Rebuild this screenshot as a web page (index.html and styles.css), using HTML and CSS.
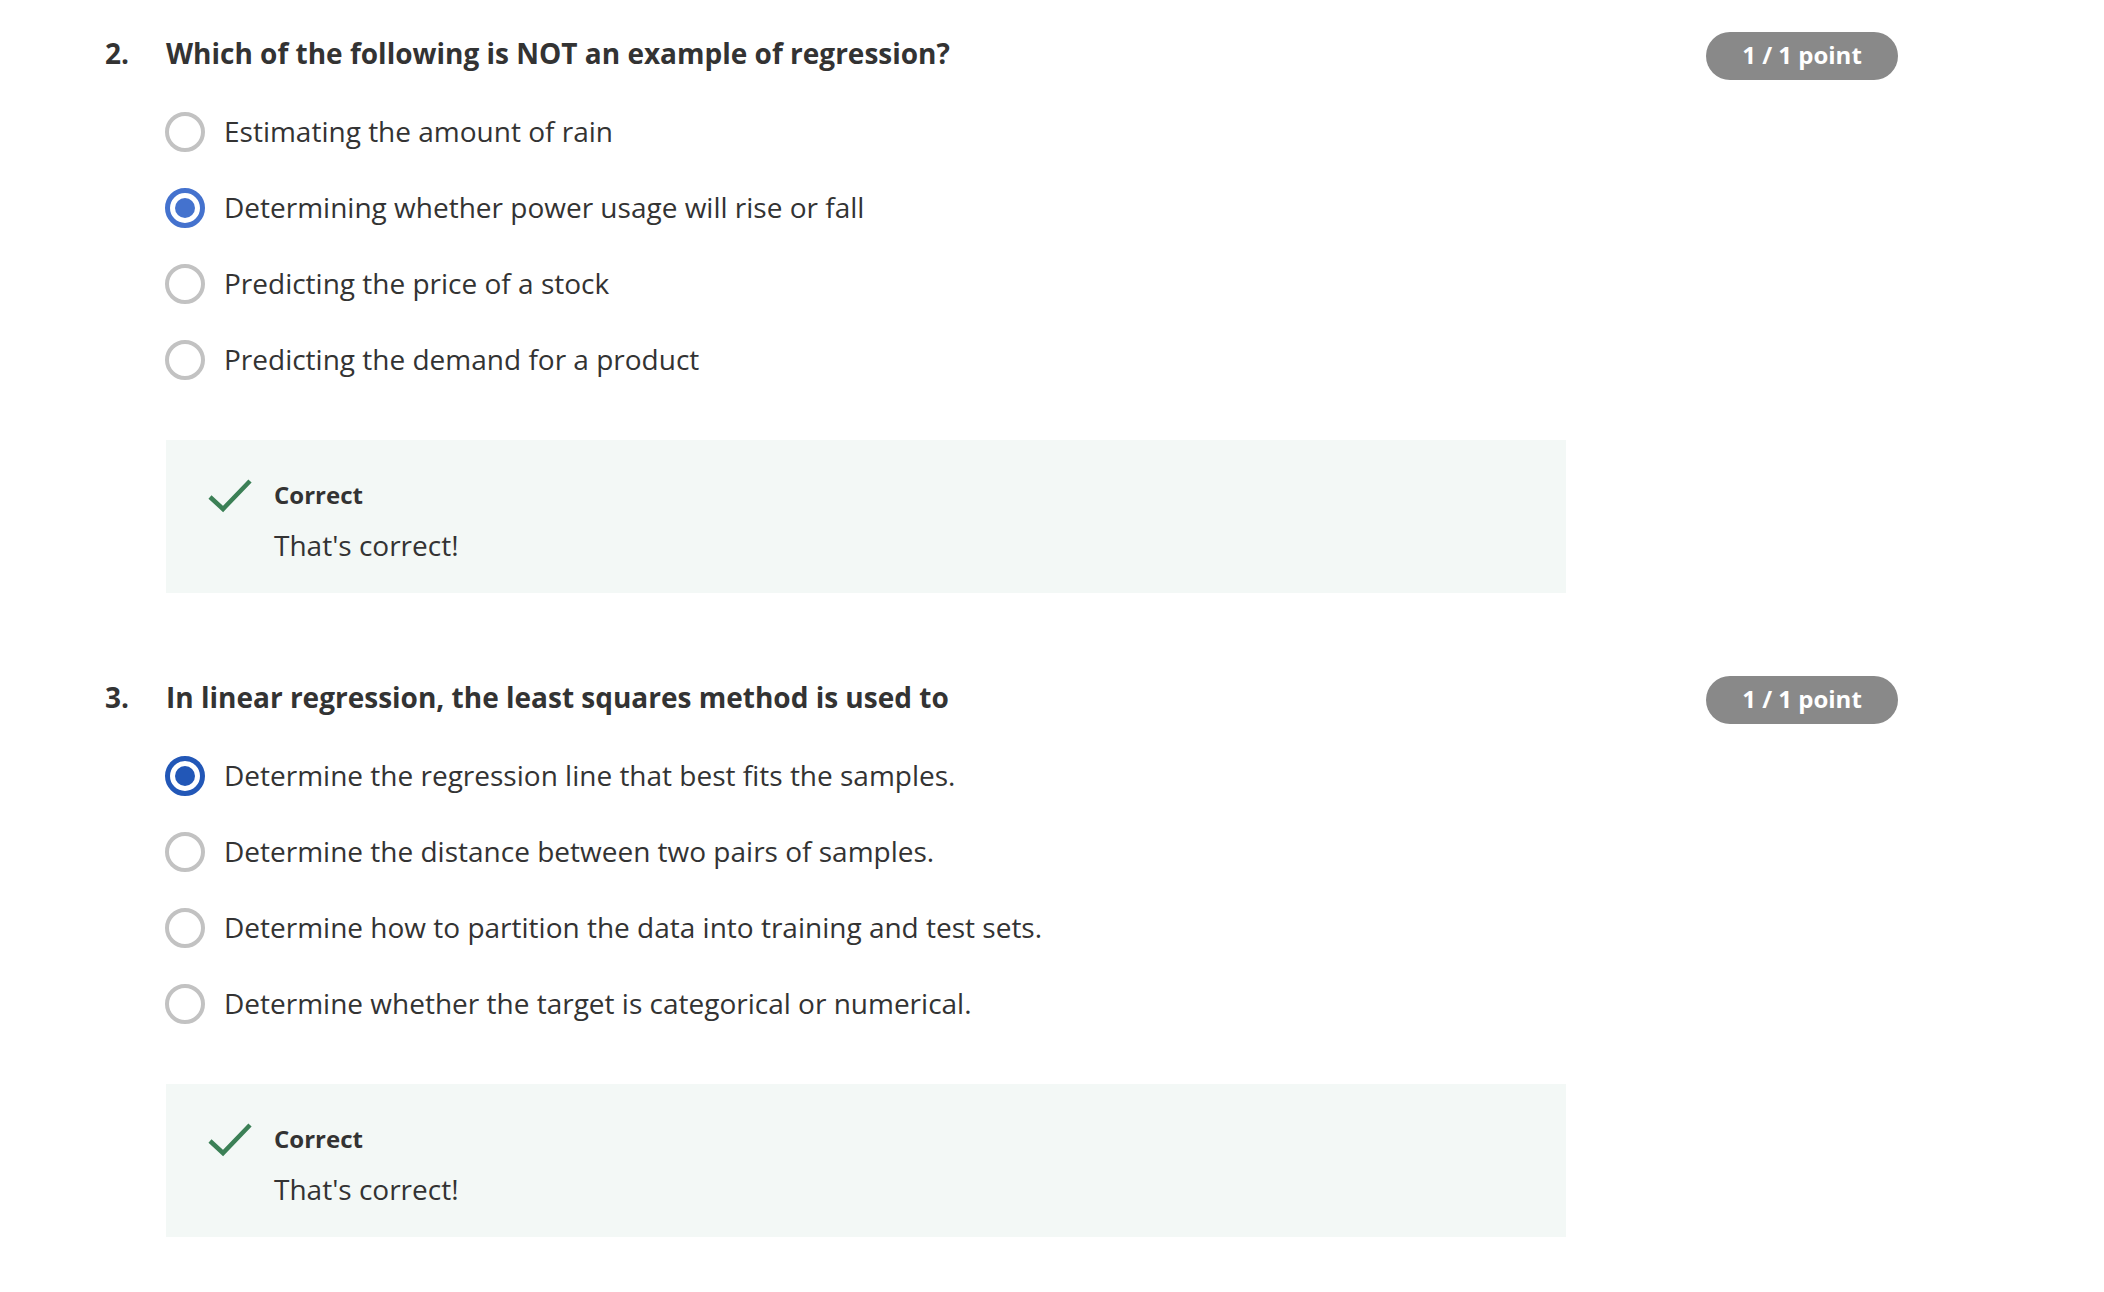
FILE: index.html
```html
<!DOCTYPE html>
<html lang="en">
<head>
<meta charset="utf-8">
<title>Quiz</title>
<link rel="stylesheet" href="styles.css">
</head>
<body>
<main class="quiz">
  <section class="question">
    <div class="q-head">
      <div class="q-num">2.</div>
      <div class="q-title">Which of the following is NOT an example of regression?</div>
      <div class="badge">1 / 1 point</div>
    </div>
    <div class="options">
      <div class="option"><span class="radio"></span><span class="opt-text">Estimating the amount of rain</span></div>
      <div class="option"><span class="radio checked light"></span><span class="opt-text">Determining whether power usage will rise or fall</span></div>
      <div class="option"><span class="radio"></span><span class="opt-text">Predicting the price of a stock</span></div>
      <div class="option"><span class="radio"></span><span class="opt-text">Predicting the demand for a product</span></div>
    </div>
    <div class="feedback">
      <svg class="check" width="48" height="40" viewBox="0 0 48 40"><polyline points="4,22 17,34 44,6" fill="none" stroke="#3b8056" stroke-width="4.5"/></svg>
      <div class="fb-body">
        <div class="fb-title">Correct</div>
        <div class="fb-text">That's correct!</div>
      </div>
    </div>
  </section>
  <section class="question">
    <div class="q-head">
      <div class="q-num">3.</div>
      <div class="q-title">In linear regression, the least squares method is used to</div>
      <div class="badge">1 / 1 point</div>
    </div>
    <div class="options">
      <div class="option"><span class="radio checked"></span><span class="opt-text">Determine the regression line that best fits the samples.</span></div>
      <div class="option"><span class="radio"></span><span class="opt-text">Determine the distance between two pairs of samples.</span></div>
      <div class="option"><span class="radio"></span><span class="opt-text">Determine how to partition the data into training and test sets.</span></div>
      <div class="option"><span class="radio"></span><span class="opt-text">Determine whether the target is categorical or numerical.</span></div>
    </div>
    <div class="feedback">
      <svg class="check" width="48" height="40" viewBox="0 0 48 40"><polyline points="4,22 17,34 44,6" fill="none" stroke="#3b8056" stroke-width="4.5"/></svg>
      <div class="fb-body">
        <div class="fb-title">Correct</div>
        <div class="fb-text">That's correct!</div>
      </div>
    </div>
  </section>
</main>
</body>
</html>
```
FILE: styles.css
```css
* { box-sizing: border-box; }
html, body { margin: 0; background: #ffffff; }
body {
  font-family: "Open Sans", "Noto Sans", sans-serif;
  color: #333333;
  width: 2104px;
  height: 1292px;
  overflow: hidden;
}
.quiz {
  padding: 32px 206px 0 105px;
  display: flex;
  flex-direction: column;
  gap: 83px;
}
.q-head {
  display: flex;
  align-items: flex-start;
  height: 48px;
}
.q-num {
  width: 61px;
  flex: none;
  font-size: 28px;
  font-weight: 700;
  line-height: 36px;
  padding-top: 3px;
}
.q-title {
  flex: 1;
  font-size: 28px;
  font-weight: 700;
  line-height: 36px;
  padding-top: 3px;
}
.badge {
  flex: none;
  width: 192px;
  height: 48px;
  border-radius: 24px;
  background: #898989;
  color: #ffffff;
  font-size: 24px;
  font-weight: 700;
  line-height: 46px;
  text-align: center;
}
.options {
  margin-top: 14px;
  padding-left: 60px;
  display: flex;
  flex-direction: column;
}
.option {
  height: 76px;
  display: flex;
  align-items: center;
  gap: 19px;
}
.radio {
  flex: none;
  width: 40px;
  height: 40px;
  border-radius: 50%;
  border: 4px solid #c2c2c2;
  background: #fff;
  display: flex;
  align-items: center;
  justify-content: center;
}
.radio.checked {
  border: 5px solid #2257b7;
}
.radio.checked::after {
  content: "";
  width: 20px;
  height: 20px;
  border-radius: 50%;
  background: #2257b7;
}
.radio.checked.light { border-color: #4472ce; }
.radio.checked.light::after { background: #4472ce; }
.opt-text {
  font-size: 28px;
  line-height: 36px;
  padding-bottom: 2px;
  color: #333333;
}
.feedback {
  margin-top: 42px;
  margin-left: 61px;
  width: 1400px;
  height: 153px;
  background: #f3f8f6;
  padding: 39px 40px 28px 40px;
  display: flex;
  align-items: flex-start;
  gap: 20px;
}
.check {
  flex: none;
  margin-top: -4px;
}
.fb-title {
  font-size: 24px;
  font-weight: 700;
  line-height: 32px;
}
.fb-text {
  margin-top: 14px;
  font-size: 28px;
  line-height: 40px;
}
```
